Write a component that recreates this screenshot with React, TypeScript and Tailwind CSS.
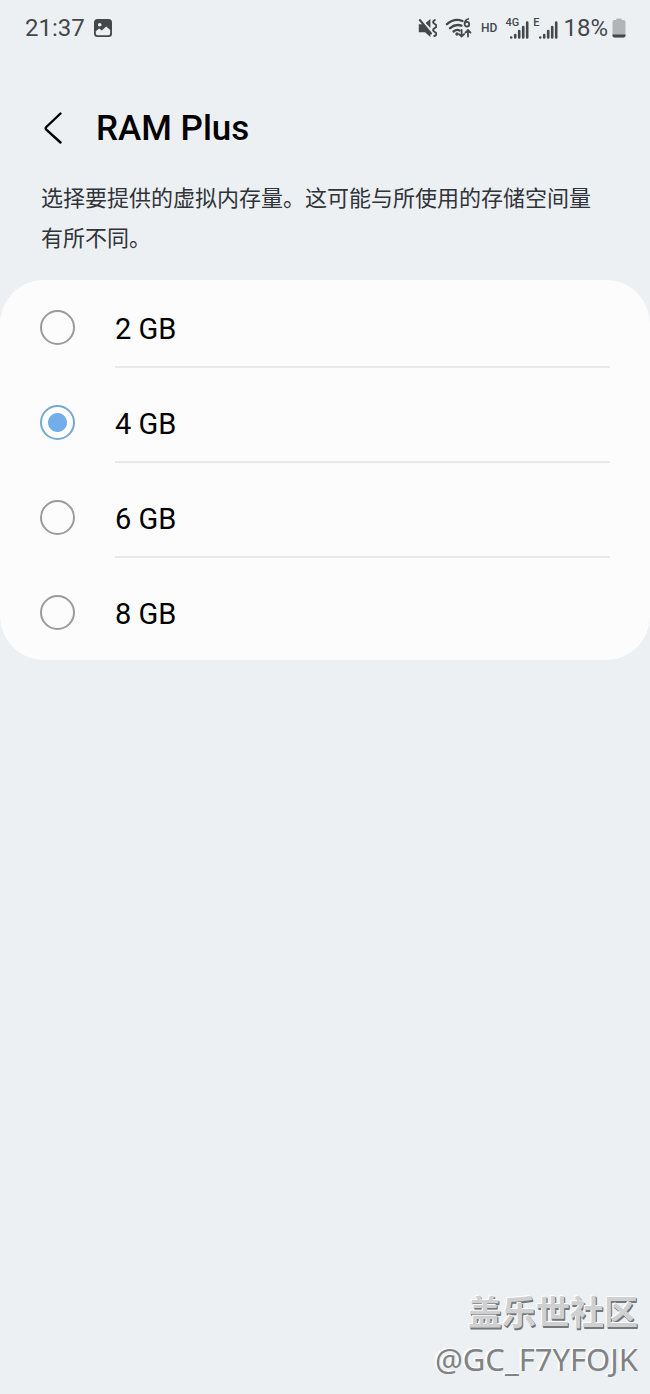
import React, { useState } from 'react';

const ramOptions = ['2 GB', '4 GB', '6 GB', '8 GB'];

// Main settings page
export default function App() {
  const [selected, setSelected] = useState('4 GB');

  return (
    <div className="flex min-h-screen flex-col bg-[#ecf0f3] font-['Roboto','Noto_Sans_CJK_SC',sans-serif] text-black">
      <StatusBar />
      <main>
        <header className="flex items-center gap-8 px-10 pt-12">
          <button type="button" aria-label="Back" className="flex h-12 w-6 items-center">
            <BackIcon />
          </button>
          <h1 id="page-title" className="text-[35px] leading-[50px] font-medium">RAM Plus</h1>
        </header>
        <p className="px-[41px] pt-[25px] text-[22px] leading-10 text-[#303338]">
          选择要提供的虚拟内存量。这可能与所使用的存储空间量有所不同。
        </p>
        <div role="radiogroup" aria-labelledby="page-title" className="mt-[21px] rounded-[44px] bg-[#fcfcfc] px-10">
          {ramOptions.map((option) => (
            <RamOption
              key={option}
              label={option}
              checked={selected === option}
              onSelect={() => setSelected(option)}
            />
          ))}
        </div>
      </main>
      <Watermark />
    </div>
  );
}

function RamOption({ label, checked, onSelect }: { label: string; checked: boolean; onSelect: () => void }) {
  return (
    <label className="group flex h-[95px] cursor-pointer items-stretch gap-10">
      <input
        type="radio"
        name="ram"
        checked={checked}
        onChange={onSelect}
        className="size-[35px] shrink-0 appearance-none self-center rounded-full border-2 border-[#9b9b9b] checked:border-[#75a9cf] checked:bg-white checked:bg-[radial-gradient(circle,#72aeea_9px,transparent_10px)]"
      />
      <span className="mb-[7px] flex flex-1 items-center border-b-2 border-[#e8e8e8] pt-[11px] text-[29px] leading-9 group-last:border-transparent">
        {label}
      </span>
    </label>
  );
}

function StatusBar() {
  return (
    <div className="flex h-14 items-center justify-between pr-6 pl-[25px] text-2xl text-[#43484b]">
      <div className="flex items-center gap-[9px]">
        <span>21:37</span>
        <PictureIcon />
      </div>
      <div className="flex items-center">
        <MuteIcon />
        <WifiIcon />
        <span className="ml-[9px] text-xs font-medium">HD</span>
        <span className="ml-2 self-start text-[11px] leading-[14px] font-medium">
          <span className="block pt-1">4G</span>
        </span>
        <SignalIcon />
        <span className="ml-1 self-start text-[11px] leading-[14px] font-medium">
          <span className="block pt-1">E</span>
        </span>
        <SignalIcon narrow />
        <span className="ml-[5px]">18%</span>
        <BatteryIcon />
      </div>
    </div>
  );
}

function Watermark() {
  return (
    <footer className="mt-auto flex flex-col items-end pr-3 pb-3">
      <p className="text-[34px] leading-[46px] font-bold text-[#cfd0d1] [text-shadow:-1px_-1px_0_#fff,1px_1px_0_#777,1px_2px_0_#777]">
        盖乐世社区
      </p>
      <p className="font-['Noto_Sans',sans-serif] text-[31px] leading-[46px] text-[#808283] [text-shadow:-1px_-1px_0_#fff,-2px_-1px_0_#fff]">
        @GC_F7YFOJK
      </p>
    </footer>
  );
}

function BackIcon() {
  return (
    <svg width="24" height="34" viewBox="0 0 24 34" fill="none" stroke="currentColor" strokeWidth="2.4" strokeLinecap="round" strokeLinejoin="round">
      <path d="M20.5 1.500 6.300 15q-1.200 1.300 0 2.600L20.500 30.500" />
    </svg>
  );
}

function PictureIcon() {
  return (
    <svg width="18" height="18" viewBox="0 0 18 18">
      <rect width="18" height="18" rx="3.5" fill="currentColor" />
      <circle cx="5.7" cy="5.8" r="1.8" fill="#ecf0f3" />
      <path d="M1.800 12.200 5.200 9.400l2.600 2.200 4.400-4L16.200 11v3.300q0 1.900-1.900 1.900H3.700q-1.900 0-1.900-1.900z" fill="#ecf0f3" />
    </svg>
  );
}

function MuteIcon() {
  return (
    <svg width="19" height="20" viewBox="0 0 19 20" fill="none" stroke="currentColor">
      <path d="M.8 6.200h4L12.400 14v5L7 14.200H.8zM7.600 5 12.400 1v9z" fill="currentColor" stroke="none" />
      <path d="M1.800 2 13 15.500" strokeWidth="2" strokeLinecap="round" />
      <path d="M16.800 2q-3.400 2 0 4t0 4q-3.400 2 0 4t-.4 4" strokeWidth="2" strokeLinecap="round" />
    </svg>
  );
}

function WifiIcon() {
  return (
    <svg className="ml-2" width="27" height="22" viewBox="0 0 27 22" fill="none" stroke="currentColor" strokeWidth="2.3" strokeLinecap="round">
      <path d="M2 7.200Q9 .8 17.500 4M5 11.200Q10.500 6.500 16.500 8.700M8.600 14.500q3-2.500 6-1" />
      <circle cx="12" cy="17" r="1.7" fill="currentColor" stroke="none" />
      <path d="M23.300 2q-3.700 1-3.700 5M19.600 7.200a2.300 2.300 0 1 0 4.600 0 2.300 2.300 0 1 0-4.600 0" strokeWidth="1.8" />
      <path d="M16.600 13v6.500m-2.500-2.400 2.500 2.500 2.500-2.500M23 19.600V13.200m-2.500 2.400L23 13.100l2.500 2.500" strokeWidth="1.8" />
    </svg>
  );
}

function SignalIcon({ narrow = false }: { narrow?: boolean }) {
  return (
    <svg className={narrow ? '-ml-px mt-1' : '-ml-[10px] mt-1'} width="20" height="20" viewBox="0 0 20 20" fill="none" stroke="currentColor" strokeWidth="2.6" strokeLinecap="round">
      <path d="M2.200 17.500h.01M6.200 17.500v-2.500M10.200 17.500V11M14.200 17.500V7M18.200 17.500V2.500" />
    </svg>
  );
}

function BatteryIcon() {
  return (
    <svg className="ml-1" width="14" height="20" viewBox="0 0 14 20">
      <path d="M4 2q0-1.5 1.5-1.5h3Q10 .5 10 2h1.500Q13.500 2 13.500 4v13.500q0 2-2 2h-9q-2 0-2-2V4q0-2 2-2z" fill="#b2b5b7" />
      <path d="M.5 16.500h13v1q0 2-2 2h-9q-2 0-2-2z" fill="currentColor" />
    </svg>
  );
}
